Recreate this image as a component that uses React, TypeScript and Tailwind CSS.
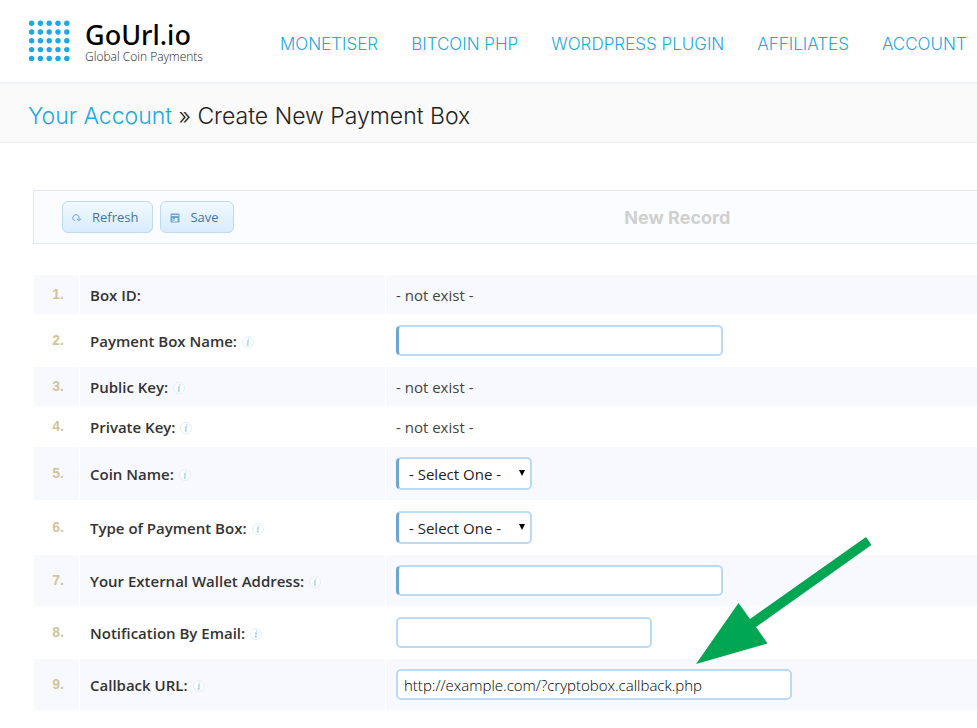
import React from "react";

const navItems = ["MONETISER", "BITCOIN PHP", "WORDPRESS PLUGIN", "AFFILIATES", "ACCOUNT"];

const dots = [0, 1, 2, 3, 4];

function LogoMark() {
  return (
    <svg width="42" height="42" viewBox="0 0 42 42" fill="#1ba9e1" aria-hidden="true">
      {dots.map((row) =>
        dots.map((col) => <circle key={`${row}-${col}`} cx={3.6 + col * 8.8} cy={3.2 + row * 8.8} r="2.7" />)
      )}
    </svg>
  );
}

function RefreshIcon() {
  return (
    <svg width="10" height="10" viewBox="0 0 10 10" fill="none" stroke="#6aa6d2" aria-hidden="true">
      <path d="M3.2 7.2H2.4A2 2 0 0 1 1 4.2 3.1 3.1 0 0 1 7 3.8V7.4" />
      <path d="M4.8 5.6 7 7.8 9.2 5.6" />
    </svg>
  );
}

function SaveIcon() {
  return (
    <svg width="10" height="10" viewBox="0 0 10 10" aria-hidden="true">
      <rect x="0.5" y="0.5" width="9" height="9" rx="1.2" fill="#6aa6d2" />
      <path d="M1.5 2.5h7" stroke="#dcecf9" />
      <path d="M2.500 5h5v3.500h-5z" fill="#e6f2fc" />
      <path d="M3 5h2v3H3z" fill="#6aa6d2" />
      <path d="M3.500 6h1v2.500h-1z" fill="#e6f2fc" />
    </svg>
  );
}

function InfoIcon() {
  return (
    <svg width="12" height="12" viewBox="0 0 12 12" aria-hidden="true">
      <circle cx="6" cy="6" r="5.5" fill="#fdfeff" stroke="#e4edf5" />
      <path d="M6.9 2.3 6.6 3.5M5 5h1.3L5.5 9h1.3" fill="none" stroke="#a5d3f7" strokeWidth="1.3" />
    </svg>
  );
}

function TextField({ id, size, required, value }: { id: string; size: string; required?: boolean; value?: string }) {
  return (
    <input
      id={id}
      type="text"
      defaultValue={value}
      className={`block h-[31px] rounded-[5px] border-2 border-[#b9dbf5] bg-white px-[6px] text-[15px] font-light text-black outline-none ${size} ${
        required ? "border-l-[3px] border-l-[#6aa6d2]" : ""
      }`}
    />
  );
}

function SelectField({ id }: { id: string }) {
  return (
    <div className="relative w-[136px]">
      <select
        id={id}
        className="block h-[33px] w-full appearance-none rounded-[5px] border-2 border-l-[3px] border-[#b9dbf5] border-l-[#6aa6d2] bg-white pt-[2px] pl-[10px] text-[15px] text-[#222] outline-none"
      >
        <option>- Select One -</option>
      </select>
      <svg className="pointer-events-none absolute top-[13px] right-[7px]" width="6" height="6" viewBox="0 0 6 6" aria-hidden="true">
        <path d="M0 0h6L3 6z" fill="#000" />
      </svg>
    </div>
  );
}

function Arrow() {
  return (
    <svg className="pointer-events-none absolute bottom-[46px] left-[310px]" width="175" height="127" viewBox="0 0 175 127" aria-hidden="true">
      <path d="M0 127 42.500 66 54 82 170 0l5.500 8L60 90l11.500 16.500z" fill="#00a651" />
    </svg>
  );
}

type Row = { id: string; label: string; info?: boolean; field?: React.ReactNode; marked?: boolean };

const rows: Row[] = [
  { id: "box-id", label: "Box ID:" },
  { id: "box-name", label: "Payment Box Name:", info: true, field: <TextField id="box-name" size="w-[327px]" required /> },
  { id: "public-key", label: "Public Key:", info: true },
  { id: "private-key", label: "Private Key:", info: true },
  { id: "coin-name", label: "Coin Name:", info: true, field: <SelectField id="coin-name" /> },
  { id: "box-type", label: "Type of Payment Box:", info: true, field: <SelectField id="box-type" /> },
  { id: "wallet", label: "Your External Wallet Address:", info: true, field: <TextField id="wallet" size="w-[327px]" required /> },
  { id: "email", label: "Notification By Email:", info: true, field: <TextField id="email" size="w-[256px]" /> },
  {
    id: "callback",
    label: "Callback URL:",
    info: true,
    marked: true,
    field: <TextField id="callback" size="w-[396px]" value="http://example.com/?cryptobox.callback.php" />,
  },
];

const toolButton =
  "flex h-8 items-center gap-[10px] rounded-[6px] border border-[#bfd9ee] bg-linear-to-b from-[#f0f8ff] to-[#d9ecfc] pl-[9px] pr-[14px] pt-[2px] text-[13px] text-[#3f76a6]";

export default function App() {
  return (
    <div className="min-h-screen overflow-x-hidden bg-white font-['Open_Sans',sans-serif] text-[#444]">
      <header className="flex h-[84px] items-center border-b-2 border-[#eff4f9] pl-7">
        <a href="#home" className="flex w-[252px] shrink-0 items-center gap-[15px]">
          <LogoMark />
          <span className="flex flex-col">
            <span className="font-['Noto_Sans',sans-serif] text-[27px] leading-[31px] font-medium text-black">GoUrl.io</span>
            <span className="text-[12px] leading-[14px] font-light text-[#222]">Global Coin Payments</span>
          </span>
        </a>
        <nav className="flex gap-[33px] pt-[7px] font-['Inter',sans-serif] text-[17px] font-light whitespace-nowrap text-[#1ba9e1]">
          {navItems.map((item) => (
            <a key={item} href="#nav">
              {item}
            </a>
          ))}
        </nav>
      </header>

      <div className="border-b border-[#f0f0f0] bg-[#fafafa] px-7 pt-4 pb-[10px]">
        <h1 className="font-['Inter',sans-serif] text-[23px] leading-8 font-light text-[#222]">
          <a href="#account" className="text-[#1ba9e1]">
            Your Account
          </a>{" "}
          » Create New Payment Box
        </h1>
      </div>

      <main className="pt-[47px] pl-[33px]">
        <div className="flex h-[54px] items-center border border-r-0 border-[#e5e7ea] bg-[#fbfcff] pl-7">
          <div className="flex gap-[7px]">
            <button type="button" className={toolButton}>
              <RefreshIcon />
              Refresh
            </button>
            <button type="button" className={toolButton}>
              <SaveIcon />
              Save
            </button>
          </div>
          <h2 className="grow pl-36 text-center font-['Inter',sans-serif] text-[18px] font-bold text-[#d0d0d0]">New Record</h2>
        </div>

        <table className="mt-[30px] w-[calc(100%+1px)] table-fixed border-separate border-spacing-[1px] text-[15px] leading-[19px]">
          <colgroup>
            <col className="w-[45px]" />
            <col className="w-[305px]" />
            <col />
          </colgroup>
          <tbody>
            {rows.map((row, index) => (
              <tr key={row.id} className="odd:bg-[#f8f9fe]">
                <td className="pr-[15px] text-right font-['Liberation_Sans',sans-serif] text-[14px] font-bold text-[#d0c49c]">{index + 1}.</td>
                <th scope="row" className="px-[10px] pt-[11px] pb-[9px] text-left font-semibold text-[#333]">
                  <span className="flex items-center gap-[5px]">
                    {row.field ? <label htmlFor={row.id}>{row.label}</label> : row.label}
                    {row.info && <InfoIcon />}
                  </span>
                </th>
                <td className={row.field ? "relative p-[10px]" : "px-[10px] pt-[11px] pb-[9px]"}>
                  {row.field ?? "- not exist -"}
                  {row.marked && <Arrow />}
                </td>
              </tr>
            ))}
          </tbody>
        </table>
      </main>
    </div>
  );
}
